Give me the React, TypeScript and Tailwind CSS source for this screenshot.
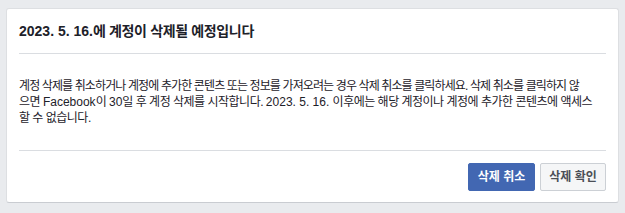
// Korean text in the reference uses a narrower Hangul face than Noto CJK,
// so Hangul runs get negative tracking while Latin runs stay normal.
const K1 = "tracking-[-0.88px]";
const K2 = "tracking-[-0.5px]";

export default function App() {
  return (
    <div
      className="min-h-[213px] bg-[#e9ebee] px-[6px] pt-[8px] pb-[10px]"
      style={{ fontFamily: '"Liberation Sans", "Noto Sans CJK KR", sans-serif' }}
    >
      <div className="rounded-[3px] border border-[#dddfe2] border-b-[#c9ccd1] bg-white">
        {/* header */}
        <div className="mx-3 flex h-[45px] items-center border-b border-[#dadde1]">
          <h1 className="text-[14px] font-bold leading-[19px] text-[#1d2129]">
            2023. 5. 16.<span className="tracking-[-0.35px]">에 계정이 삭제될 예정입니다</span>
          </h1>
        </div>

        {/* body - lines broken as in the original */}
        <div className="mx-3 border-b border-[#dadde1] py-6">
          <div className="whitespace-nowrap text-[12px] leading-[16px] text-[#1d2129]">
            <div className={K1}>
              계정 삭제를 취소하거나 계정에 추가한 콘텐츠 또는 정보를 가져오려는 경우 삭제 취소를 클릭하세요. 삭제 취소를 클릭하지 않
            </div>
            <div>
              <span className={K2}>으면 </span>Facebook<span className={K2}>이 </span>30
              <span className={K2}>일 후 계정 삭제를 시작합니다. </span>2023. 5. 16.{" "}
              <span className={K2}>이후에는 해당 계정이나 계정에 추가한 콘텐츠에 액세스</span>
            </div>
            <div className={K2}>할 수 없습니다.</div>
          </div>
        </div>

        {/* footer */}
        <div className="flex justify-end gap-[5px] px-3 pt-3 pb-[11px]">
          <button className="h-[28px] w-[67px] rounded-[2px] border border-[#4267b2] bg-[#4267b2] text-[12px] font-bold text-white">
            삭제 취소
          </button>
          <button className="h-[28px] w-[66px] rounded-[2px] border border-[#ccd0d5] bg-[#f5f6f7] text-[12px] font-bold text-[#4b4f56]">
            삭제 확인
          </button>
        </div>
      </div>
    </div>
  );
}
